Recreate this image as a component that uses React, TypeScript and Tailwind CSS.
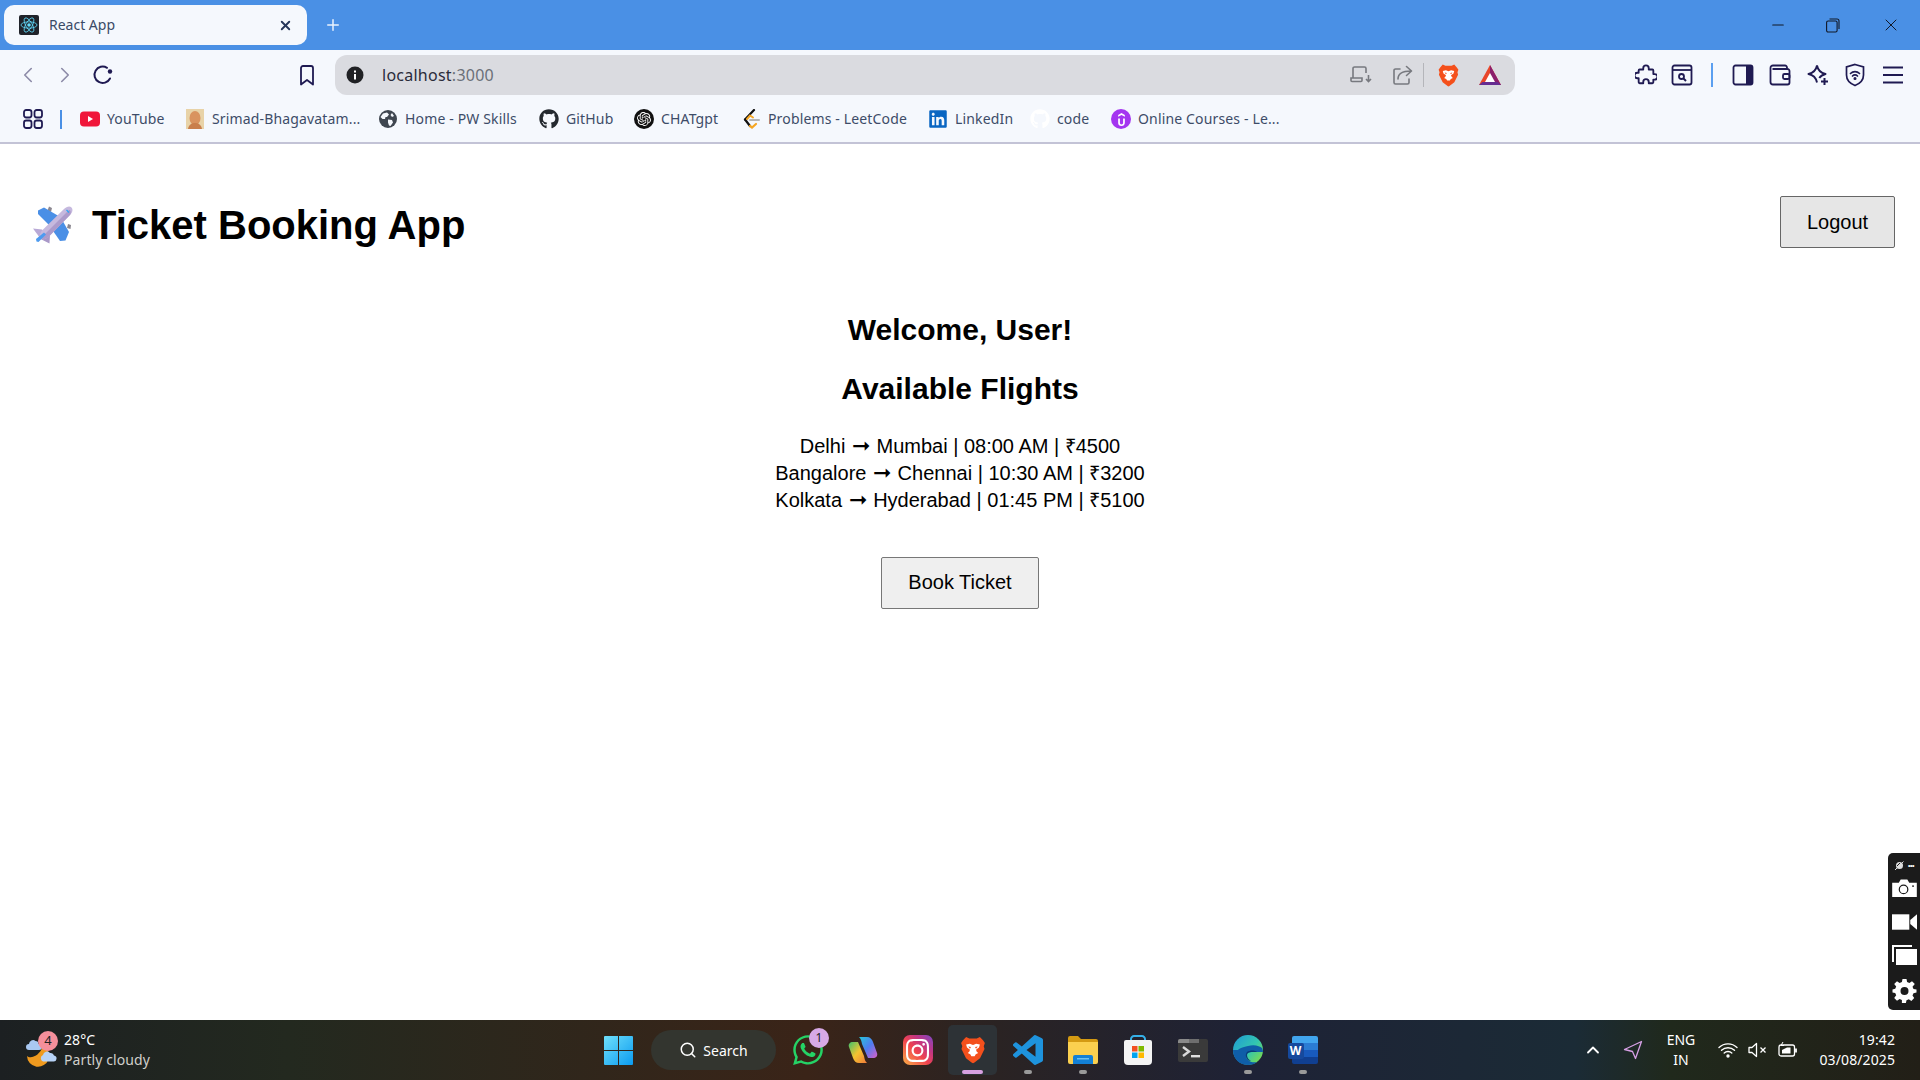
import { FaGithub, FaLinkedin, FaWhatsapp } from 'react-icons/fa'
import { SiOpenai, SiUdemy, SiInstagram } from 'react-icons/si'
import { X, Plus, ChevronLeft, ChevronRight, Search, ChevronUp, Minus } from 'lucide-react'

const ui = "font-['Noto_Sans',sans-serif]"
const navy = '#1f1a52'

function BraveIcon({ size = 24 }: { size?: number }) {
  return (
    <svg width={size} height={size} viewBox="0 0 24 24">
      <path d="M6.500 1.500 9 2.700h6l2.500-1.200L20 4.200l1.500 2.200-.9 2.500.6 2.300-3.600 7.300-4.700 3.600-.9.4-.9-.4-4.700-3.600-3.600-7.300.6-2.300-.9-2.500L4 4.200Z" fill="#f4501c" />
      <path d="M6.500 7.600 9.500 7l2.500.9 2.500-.9 3 .6-.7 2.400-2.400 1.700.6 1.600 1.200 1-2 1-.9 1.600H12h-1.300l-.9-1.600-2-1 1.200-1 .6-1.600-2.400-1.700Z" fill="#fff" />
      <path d="m8.200 9.200 2.200.4-.8 1.300Zm7.600 0-2.200.4.8 1.300ZM10.400 18h3.200L12 19.400Z" fill="#f4501c" />
    </svg>
  )
}

function PlaneEmoji() {
  return (
    <svg width="40" height="40" viewBox="0 0 40 40">
      <path d="M16 1.500 19 3l-1 4-3.500-1.500ZM35 19l3 1-.5 4-3.500-1Z" fill="#8b8790" />
      <path d="M5 5.500 11 2.500 29 13 19 23 5 9Z" fill="#4a8fe6" />
      <path d="M18 23 28 13 36 27 32.500 35.500 27 36Z" fill="#4a8fe6" />
      <path d="M0 23.500 9 24.500 13 29 7 33Z" fill="#b9a9d6" />
      <path d="M16.500 38.500 17 30 12.500 27 7.500 34Z" fill="#a998c8" />
      <path d="M38.500 2.500c1.800 1.800 1 5-1.500 7.500L15 32.500l-4.500 2-4-4 2-4.500L31 4c2.500-2.500 5.800-3.300 7.500-1.500Z" fill="#c6b9de" />
      <path d="M37 10 15 32.500l-4.500 2-2-2L36 5c1.500-.5 2.500 2.500 1 5Z" fill="#ac9bcb" />
      <path d="m3 34 8-6.500 2 2L5.500 37 3.500 36.500Z" fill="#4d9bf0" />
      <path d="m33.500 5 2.500 2.500" stroke="#2ea6f5" strokeWidth="1.200" fill="none" />
    </svg>
  )
}

const bookmarks = [
  { label: 'YouTube', width: 'w-[105px]', icon: <svg width="20" height="16" viewBox="0 0 20 16"><rect width="20" height="15" y="0.500" rx="4" fill="#f0163a" /><path d="m8 5 5 3-5 3Z" fill="#fff" /></svg> },
  { label: 'Srimad-Bhagavatam...', width: 'w-[193px]', icon: <svg width="20" height="20" viewBox="0 0 20 20"><rect x="1" width="18" height="20" fill="#e8d3a8" /><ellipse cx="10" cy="9" rx="5.500" ry="7" fill="#d9935f" /><path d="M3 20c1-5 4-6 7-6s6 1 7 6Z" fill="#c97f4c" /></svg> },
  { label: 'Home - PW Skills', width: 'w-[161px]', icon: <svg width="18" height="18" viewBox="0 0 18 18"><circle cx="9" cy="9" r="9" fill="#3f4650" /><path d="M4 3.500 8 2.500l2 2-2 2.500-1.500 0L6 9 3.500 9 1.500 7Zm5 6 4 .5 1 2.500-2.500 3.500-1.500-.5L9 12.500Zm4-6.500 2 3-2 1-1.500-2Z" fill="#f5f8fd" /></svg> },
  { label: 'GitHub', width: 'w-[95px]', icon: <FaGithub size={20} color="#24292f" /> },
  { label: 'CHATgpt', width: 'w-[107px]', icon: <span className="flex h-5 w-5 items-center justify-center rounded-full bg-[#111]"><SiOpenai size={14} color="#fff" /></span> },
  { label: 'Problems - LeetCode', width: 'w-[187px]', icon: <svg width="20" height="20" viewBox="0 0 20 20" fill="none"><path d="M13 1 4 10.500" stroke="#111" strokeWidth="2.200" strokeLinecap="round" /><path d="M4 10.500 9 17" stroke="#111" strokeWidth="2.200" strokeLinecap="round" /><path d="M9 17 11 18.500 15 15" stroke="#f5a623" strokeWidth="2.200" strokeLinecap="round" /><path d="M6 10 9 6.500 12 8.500" stroke="#f5a623" strokeWidth="2" strokeLinecap="round" /><path d="M9 11h9" stroke="#b5b5b5" strokeWidth="2" strokeLinecap="round" /></svg> },
  { label: 'LinkedIn', width: 'w-[102px]', icon: <FaLinkedin size={20} color="#0a66c2" /> },
  { label: 'code', width: 'w-[81px]', icon: <FaGithub size={20} color="#ffffff" /> },
  { label: 'Online Courses - Le...', width: 'w-auto', icon: <span className="flex h-5 w-5 items-center justify-center rounded-full bg-[#a435f0]"><SiUdemy size={13} color="#fff" /></span> },
]

const flights = [
  ['Delhi', 'Mumbai | 08:00 AM | ₹4500'],
  ['Bangalore', 'Chennai | 10:30 AM | ₹3200'],
  ['Kolkata', 'Hyderabad | 01:45 PM | ₹5100'],
]

function Slot({ className = 'w-[37.5px]', children }: { className?: string; children: React.ReactNode }) {
  return <div className={`flex shrink-0 items-center justify-center ${className}`}>{children}</div>
}

function BrowserChrome() {
  return (
    <header className={`shrink-0 ${ui}`}>
      {/* tab strip */}
      <div className="flex h-[50px] items-center bg-[#4a90e5] pl-1">
        <div className="flex h-[40px] w-[303px] items-center rounded-[10px] bg-[#f5f8fd] pl-[15px] pr-[14px]">
          <svg width="20" height="20" viewBox="0 0 20 20" fill="none" className="shrink-0">
            <rect width="20" height="20" rx="2" fill="#20232a" />
            <circle cx="10" cy="10" r="1.800" fill="#61dafb" />
            <g stroke="#61dafb" strokeWidth="0.800">
              <ellipse cx="10" cy="10" rx="8" ry="3.200" />
              <ellipse cx="10" cy="10" rx="8" ry="3.200" transform="rotate(60 10 10)" />
              <ellipse cx="10" cy="10" rx="8" ry="3.200" transform="rotate(120 10 10)" />
            </g>
          </svg>
          <span className="ml-[10px] pb-[2px] text-[14px] text-[#3a4a66]">React App</span>
          <X size={15} strokeWidth={3} color="#25365a" className="ml-auto" />
        </div>
        <Plus size={18} strokeWidth={2} color="#eaf2fd" className="ml-[17px]" />
        <div className="ml-auto flex items-center">
          <Minus size={18} strokeWidth={1.500} color="#111827" />
          <div className="ml-[39px] mr-[41px]">
            <svg width="14" height="15" viewBox="0 0 14 15" fill="none" stroke="#111827" strokeWidth="1.100"><rect x="0.600" y="3" width="10.500" height="11" rx="1.500" /><path d="M3.500 1h7.500a2 2 0 0 1 2 2v8" /></svg>
          </div>
          <X size={20} strokeWidth={1.200} color="#111827" />
          <div className="w-[19px]" />
        </div>
      </div>

      {/* toolbar */}
      <div className="flex h-[50px] items-center bg-[#f5f8fd] pl-[9px]">
        <Slot><ChevronLeft size={26} strokeWidth={1.500} color="#8d8ba8" /></Slot>
        <Slot><ChevronRight size={26} strokeWidth={1.500} color="#8d8ba8" /></Slot>
        <Slot>
          <svg width="22" height="22" viewBox="0 0 22 22" fill="none">
            <path d="M18 14.500A8.200 8.200 0 1 1 15 3.800" stroke={navy} strokeWidth="2" strokeLinecap="round" />
            <circle cx="18" cy="7.500" r="2.200" fill={navy} />
          </svg>
        </Slot>
        <Slot className="ml-[167px] w-[36px]">
          <svg width="16" height="21" viewBox="0 0 16 21" fill="none"><path d="M2 3a2 2 0 0 1 2-2h8a2 2 0 0 1 2 2v16.500l-6-4.500-6 4.500Z" stroke={navy} strokeWidth="1.800" strokeLinejoin="round" /></svg>
        </Slot>
        <div className="ml-[10.500px] flex h-[40px] w-[1180px] items-center rounded-[12px] bg-[#dadbe0] pl-[11px] pr-[5px]">
          <svg width="18" height="18" viewBox="0 0 18 18" className="shrink-0"><circle cx="9" cy="9" r="8.500" fill="#202124" /><rect x="8" y="8" width="2" height="5.500" fill="#fff" /><rect x="8" y="4.500" width="2" height="2" fill="#fff" /></svg>
          <span className="ml-[18px] text-[16px] tracking-[0.25px] text-[#2a2b3a]">localhost<span className="text-[#6b7078]">:3000</span></span>
          <div className="ml-auto flex items-center">
            <Slot className="w-[40px]">
              <svg width="22" height="20" viewBox="0 0 22 20" fill="none" stroke="#77797f" strokeWidth="1.600"><path d="M3 13V3.500A1.500 1.500 0 0 1 4.500 2h10A1.500 1.500 0 0 1 16 3.500V8" /><path d="M1 13h11v2.500a1 1 0 0 1-1 1H2a1 1 0 0 1-1-1Z" /><path d="M18.500 10v6.500m-2.500-2.500 2.500 2.500L21 14" /></svg>
            </Slot>
            <Slot className="w-[42px]">
              <svg width="21" height="21" viewBox="0 0 21 21" fill="none" stroke="#77797f" strokeWidth="1.600" strokeLinecap="round" strokeLinejoin="round"><path d="M8 4H3.500A1.500 1.500 0 0 0 2 5.500v12A1.500 1.500 0 0 0 3.500 19h12a1.500 1.500 0 0 0 1.500-1.500V14" /><path d="M6 14c0-5 4-8 13-8M14.500 1.500 19.500 6l-5 4.500" /></svg>
            </Slot>
            <div className="h-[24px] w-px bg-[#b4b5ba]" />
            <Slot className="ml-[2px] w-[44px]"><BraveIcon size={25} /></Slot>
            <Slot className="w-[40px]">
              <svg width="24" height="22" viewBox="0 0 24 22">
                <path d="M12 1 1 21h22Z" fill="#e8452a" />
                <path d="M12 1 23 21h-7L12 11Z" fill="#8a1f6e" />
                <path d="M1 21h22l-3.500-3h-15Z" fill="#662d91" />
                <path d="m12 9 5 9H7Z" fill="#fff" />
              </svg>
            </Slot>
          </div>
        </div>
        <div className="ml-[113px] flex items-center">
          <Slot className="w-[36px]">
            <svg width="22" height="22" viewBox="0 0 24 24" fill="none" stroke={navy} strokeWidth="2" strokeLinejoin="round"><path d="M9 5.500a3 3 0 0 1 6 0V7h4a1 1 0 0 1 1 1v4h1.500a3 3 0 0 1 0 6H20v3a1 1 0 0 1-1 1h-4v-1.500a3 3 0 0 0-6 0V22H5a1 1 0 0 1-1-1v-4.500H2.500a3 3 0 0 1 0-6H4V8a1 1 0 0 1 1-1h4Z" transform="translate(0 -1)" /></svg>
          </Slot>
          <Slot className="w-[36px]">
            <svg width="22" height="22" viewBox="0 0 22 22" fill="none" stroke={navy} strokeWidth="1.800"><rect x="1.500" y="1.500" width="19" height="19" rx="2" /><path d="M1.500 6h19" /><circle cx="10.500" cy="12.500" r="2.500" /><path d="m12.500 14.500 2.500 2.500" strokeWidth="2" /></svg>
          </Slot>
          <div className="mx-[11px] h-[24px] w-[2px] bg-[#5b9ff0]" />
          <Slot>
            <svg width="22" height="22" viewBox="0 0 22 22"><rect x="1.500" y="1.500" width="19" height="19" rx="2" fill="none" stroke={navy} strokeWidth="1.800" /><path d="M14 1.500h4.500a2 2 0 0 1 2 2v15a2 2 0 0 1-2 2H14Z" fill={navy} /></svg>
          </Slot>
          <Slot>
            <svg width="22" height="22" viewBox="0 0 22 22" fill="none" stroke={navy} strokeWidth="1.800"><path d="M18 5V3.500A2 2 0 0 0 16 1.500H4A2.500 2.500 0 0 0 1.500 4v14A2.500 2.500 0 0 0 4 20.500h14.500a2 2 0 0 0 2-2V7a2 2 0 0 0-2-2H3.500" /><rect x="14" y="10" width="6.500" height="5" rx="1.500" /></svg>
          </Slot>
          <Slot>
            <svg width="24" height="24" viewBox="0 0 24 24" fill="none" stroke={navy} strokeWidth="1.900" strokeLinejoin="round"><path d="M11 2.500c1 5 3.500 7.500 8.500 8.500-3 .8-5 2-6.200 4M11 2.500C10 7.500 7.500 10 2.500 11c5 1 7.500 3.500 8.500 8.500" /><path d="M18.500 15v7M15 18.500h7" strokeWidth="2" /></svg>
          </Slot>
          <Slot>
            <svg width="20" height="24" viewBox="0 0 20 24" fill="none" stroke={navy} strokeWidth="1.700" strokeLinecap="round"><path d="M10 1.500 18.500 4v8c0 5-3.500 8.500-8.500 10.500C5 20.500 1.500 17 1.500 12V4Z" /><path d="M5.500 10.500a6.500 6.500 0 0 1 9 0M7.500 13a3.500 3.500 0 0 1 5 0" /><circle cx="10" cy="15.500" r="0.700" fill={navy} /></svg>
          </Slot>
          <Slot>
            <svg width="22" height="18" viewBox="0 0 22 18" stroke={navy} strokeWidth="1.900"><path d="M1 1.500h20M1 9h20M1 16.500h20" /></svg>
          </Slot>
        </div>
      </div>

      {/* bookmarks bar */}
      <div className="flex h-[42px] items-start bg-[#f5f8fd] pl-[23px] pt-[9px]">
        <svg width="20" height="20" viewBox="0 0 20 20" fill="none" stroke={navy} strokeWidth="1.800" className="shrink-0">
          <rect x="1" y="1" width="7.500" height="7.500" rx="2.200" />
          <rect x="11.500" y="1" width="7.500" height="7.500" rx="2.200" />
          <rect x="1" y="11.500" width="7.500" height="7.500" rx="2.200" />
          <rect x="11.500" y="11.500" width="7.500" height="7.500" rx="2.200" />
        </svg>
        <div className="ml-[17px] mr-[18px] mt-px h-[19px] w-[2px] shrink-0 bg-[#4a90e5]" />
        {bookmarks.map(b => (
          <div key={b.label} className={`flex h-5 shrink-0 items-center gap-[7px] ${b.width}`}>
            <span className="flex w-[20px] shrink-0 justify-center">{b.icon}</span>
            <span className="whitespace-nowrap pb-[2px] text-[14px] tracking-[0.15px] text-[#3d4c68]">{b.label}</span>
          </div>
        ))}
      </div>
      <div className="h-[2px] bg-[#c3c3d6]" />
    </header>
  )
}

function CaptureWidget() {
  return (
    <div className="absolute bottom-[10px] right-0 flex h-[157px] w-[32px] flex-col items-center rounded-l-[5px] bg-[#1b1b1b] pt-[5px]">
      <div className="flex h-[14px] items-center gap-[3px]">
        <svg width="11" height="11" viewBox="0 0 11 11" fill="none" className="shrink-0"><circle cx="5.500" cy="5.500" r="3.500" fill="#ddd" /><path d="M1 10 9.500 1.500" stroke="#ddd" strokeWidth="1" /><path d="m3 6 3-3" stroke="#1b1b1b" strokeWidth="1" /></svg>
        <span className="whitespace-nowrap text-[7px] font-bold leading-none tracking-[-0.5px] text-white">•••</span>
      </div>
      <svg width="25" height="18" viewBox="0 0 26 19" className="mt-[7px] shrink-0"><path d="M0 4h7l2-3.500h7L18 4h8v15H0Z" fill="#fff" /><circle cx="12" cy="11" r="4.500" fill="none" stroke="#1b1b1b" strokeWidth="1.300" /><circle cx="22" cy="7.500" r="1" fill="#1b1b1b" /></svg>
      <svg width="25" height="16" viewBox="0 0 26 16" className="mt-[17px] shrink-0"><rect width="18" height="16" fill="#fff" /><path d="m19 6 7-6v16l-7-6Z" fill="#fff" /></svg>
      <svg width="25" height="20" viewBox="0 0 25 20" className="mt-[15px] shrink-0"><path d="M0 0h20v2H2v15H0Z" fill="#fff" /><rect x="4" y="4" width="21" height="16" fill="#fff" /></svg>
      <svg width="25" height="24" viewBox="0 0 24 24" className="mt-[14px] shrink-0"><path fillRule="evenodd" d="M10 0h4l.6 3 2.300 1 2.600-1.700 2.800 2.800L20 7.700l1 2.300 3 .6v3l-3 .6-1 2.300 1.700 2.600-2.800 2.800-2.600-1.700-2.300 1-.6 2.800h-4L9.400 21l-2.300-1-2.600 1.700-2.800-2.800 2-2.600-1-2.300L0 13.400v-3l2.700-.6 1-2.300-2-2.400 2.800-2.800L7.100 4l2.300-1Zm2 8a4 4 0 1 0 0 8 4 4 0 0 0 0-8Z" fill="#fff" /></svg>
    </div>
  )
}

function Page() {
  return (
    <main className="relative flex-1 bg-white font-['Liberation_Sans',Arial,sans-serif] text-black">
      <div className="flex items-start justify-between pl-[33px] pr-[25px] pt-[52px]">
        <div className="mt-[6px] flex items-center">
          <PlaneEmoji />
          <h1 className="ml-[19px] text-[40px] font-bold leading-[46px]">Ticket Booking App</h1>
        </div>
        <button className="h-[52px] w-[115px] rounded-[2px] border border-[#666] bg-[#e6e6e6] text-[20px]">Logout</button>
      </div>
      <div className="mt-[64px] flex flex-col items-center">
        <h2 className="text-[30px] font-bold leading-[36px]">Welcome, User!</h2>
        <h2 className="mt-[23px] text-[30px] font-bold leading-[36px]">Available Flights</h2>
        <ul className="mt-[26px] text-center text-[20px] leading-[27px]">
          {flights.map(([from, rest]) => (
            <li key={from}>{from} <span className="mx-[1px] text-[22px] leading-none">➞</span> {rest}</li>
          ))}
        </ul>
        <button className="mt-[43px] h-[52px] w-[158px] rounded-[2px] border border-[#777] bg-[#efefef] pb-[2px] text-[20px]">Book Ticket</button>
      </div>
      <CaptureWidget />
    </main>
  )
}

function WeatherIcon() {
  return (
    <div className="relative h-[36px] w-[36px] shrink-0">
      <svg width="36" height="36" viewBox="0 0 36 36">
        <path d="M20 14a11 11 0 1 1-16 10c3 3 12 1 16-10Z" fill="#ef9a1f" />
        <path d="M6 12a4 4 0 0 1 6.500-3 3 3 0 0 1 3 3H16a3 3 0 0 1 0 6H6a3 3 0 0 1 0-6Z" fill="#a9c8f2" />
        <path d="M20 23a4 4 0 0 1 7-2 3.500 3.500 0 0 1 4 2.500 3 3 0 0 1-1 6H20a3.500 3.500 0 0 1 0-6.500Z" fill="#b7d3f7" />
      </svg>
      <span className="absolute left-[15px] top-[-1px] flex h-[20px] w-[20px] items-center justify-center rounded-full bg-[#f58f9b] text-[13px] text-[#222]">4</span>
    </div>
  )
}

function Taskbar() {
  const slot = 'relative flex h-[50px] w-[55px] shrink-0 items-center justify-center'
  return (
    <footer className={`flex h-[60px] shrink-0 items-center bg-[linear-gradient(90deg,#1c2022_0%,#23291f_15%,#3a2418_42%,#2a2323_52%,#1e2236_65%,#1b2b36_82%,#20291c_87%,#221f17_100%)] text-white ${ui}`}>
      <div className="flex w-[591px] shrink-0 items-center pl-[23px]">
        <WeatherIcon />
        <div className="ml-[5px] flex flex-col text-[14px] leading-[20px] tracking-[0.1px]">
          <span>28°C</span>
          <span className="text-[#d0cfcb]">Partly cloudy</span>
        </div>
      </div>
      <div className={slot}>
        <svg width="29" height="29" viewBox="0 0 29 29">
          <defs><linearGradient id="win" x1="0" y1="0" x2="1" y2="1"><stop offset="0" stopColor="#6fe0fb" /><stop offset="1" stopColor="#0b9bf0" /></linearGradient></defs>
          <path d="M1 0h13v14H0V1a1 1 0 0 1 1-1Zm14 0h13a1 1 0 0 1 1 1v13H15ZM0 15h14v14H1a1 1 0 0 1-1-1Zm15 0h14v13a1 1 0 0 1-1 1H15Z" fill="url(#win)" />
        </svg>
      </div>
      <div className="ml-[5px] flex h-[40px] w-[125px] shrink-0 items-center justify-center gap-[6px] rounded-full bg-[#33352f]">
        <Search size={18} strokeWidth={2} />
        <span className="text-[14px]">Search</span>
      </div>
      <div className="ml-[4px] flex items-center">
        <div className={slot}>
          <FaWhatsapp size={34} color="#25d366" />
          <span className="absolute left-[29px] top-[3px] flex h-[20px] w-[20px] items-center justify-center rounded-full bg-[#d7a9e6] text-[12px] text-[#222]">1</span>
        </div>
        <div className={slot}>
          <svg width="30" height="28" viewBox="0 0 30 28">
            <defs>
              <linearGradient id="cop1" x1="0" y1="0" x2="1" y2="1"><stop offset="0" stopColor="#26c6da" /><stop offset="0.500" stopColor="#4f7cf0" /><stop offset="1" stopColor="#d85fc8" /></linearGradient>
              <linearGradient id="cop2" x1="0" y1="0" x2="1" y2="1"><stop offset="0" stopColor="#3fbf6a" /><stop offset="0.500" stopColor="#f4c430" /><stop offset="1" stopColor="#f07a3a" /></linearGradient>
            </defs>
            <path d="M11 1h8c3 0 5 2 6 5l4 11c1 3-1 5-4 5h-5L14 8c-.5-3-1-5-3-7Z" fill="url(#cop1)" />
            <path d="M19 27h-8c-3 0-5-2-6-5L1 11c-1-3 1-5 4-5h5l6 14c.5 3 1 5 3 7Z" fill="url(#cop2)" />
          </svg>
        </div>
        <div className={slot}>
          <div className="flex h-[30px] w-[30px] items-center justify-center rounded-[7px] bg-[linear-gradient(45deg,#fcb045_0%,#f0434f_45%,#c13584_70%,#7a49c8_100%)]">
            <SiInstagram size={23} color="#fff" />
          </div>
        </div>
        <div className={slot}>
          <div className="flex h-[50px] w-[49px] items-center justify-center rounded-[5px] bg-[#2d3236]"><BraveIcon size={30} /></div>
          <span className="absolute bottom-[1px] left-[17px] h-[4px] w-[21px] rounded-full bg-[#d7a0e0]" />
        </div>
        <div className={slot}>
          <svg width="30" height="30" viewBox="0 0 24 24"><path d="M23.150 2.587 18.210.21a1.494 1.494 0 0 0-1.705.29l-9.460 8.630-4.120-3.128a.999.999 0 0 0-1.276.057L.327 7.261A1 1 0 0 0 .326 8.740L3.899 12 .326 15.260a1 1 0 0 0 .001 1.479L1.650 17.940a.999.999 0 0 0 1.276.057l4.120-3.128 9.460 8.630a1.492 1.492 0 0 0 1.704.29l4.942-2.377A1.500 1.500 0 0 0 24 20.060V3.939a1.500 1.500 0 0 0-.85-1.352zm-5.146 14.861L10.826 12l7.178-5.448v10.896z" fill="#1e93dd" /></svg>
          <span className="absolute bottom-[1px] left-[24px] h-[4px] w-[8px] rounded-full bg-[#9a9a9a]" />
        </div>
        <div className={slot}>
          <svg width="30" height="28" viewBox="0 0 30 28">
            <path d="M0 2a2 2 0 0 1 2-2h8l3 3h15a2 2 0 0 1 2 2v4H0Z" fill="#d49a12" />
            <path d="M0 6h30v20a2 2 0 0 1-2 2H2a2 2 0 0 1-2-2Z" fill="#fbd04f" />
            <path d="M5 28v-7a2 2 0 0 1 2-2h16a2 2 0 0 1 2 2v7Z" fill="#1380d6" />
            <rect x="9" y="22" width="12" height="1.500" fill="#6cc0f2" />
          </svg>
          <span className="absolute bottom-[1px] left-[24px] h-[4px] w-[8px] rounded-full bg-[#9a9a9a]" />
        </div>
        <div className={slot}>
          <svg width="30" height="30" viewBox="0 0 30 30">
            <path d="M7 4c0-2 2-4 4-4h8c2 0 4 2 4 4v2h-2V4c0-1-1-2-2-2h-8C10 2 9 3 9 4v2H7Z" fill="#35b0e8" />
            <path d="M1 7a2 2 0 0 1 2-2h24a2 2 0 0 1 2 2v19a4 4 0 0 1-4 4H5a4 4 0 0 1-4-4Z" fill="#f4f4f4" />
            <rect x="9" y="11" width="5.500" height="5.500" fill="#f25022" /><rect x="15.500" y="11" width="5.500" height="5.500" fill="#7fba00" />
            <rect x="9" y="17.500" width="5.500" height="5.500" fill="#00a4ef" /><rect x="15.500" y="17.500" width="5.500" height="5.500" fill="#ffb900" />
          </svg>
        </div>
        <div className={slot}>
          <svg width="30" height="23" viewBox="0 0 30 23">
            <rect width="30" height="23" rx="2" fill="#3a3a3a" />
            <path d="M0 2a2 2 0 0 1 2-2h9v4H0Z" fill="#8a8a8a" /><rect x="11" width="10" height="4" fill="#6e6e6e" />
            <path d="m5 8 6 4.500L5 17" fill="none" stroke="#d8d8d8" strokeWidth="2.400" />
            <rect x="13" y="16" width="9" height="2.400" fill="#e0e0e0" />
          </svg>
        </div>
        <div className={slot}>
          <svg width="30" height="30" viewBox="0 0 30 30">
            <defs><linearGradient id="edge" x1="0" y1="0" x2="1" y2="0.800"><stop offset="0" stopColor="#1e9ad6" /><stop offset="0.600" stopColor="#33c6b0" /><stop offset="1" stopColor="#7ddc4a" /></linearGradient></defs>
            <circle cx="15" cy="15" r="15" fill="url(#edge)" />
            <path d="M0 15c0 9 7 15 15 15 4 0 7-1 9-3-5 1-10-1-11-5-.5-3 2-5 6-5h11c0-2-.5-3-1-4-2-2-8-4-14-2-6 1-9 3-10 4Z" fill="#0f5ea8" />
            <path d="M14 17c3-2 8-2 10 0h-5c-3 0-5 1-5 3 0 3 2 5 4 6-4 0-7-5-4-9Z" fill="#0a3d78" />
          </svg>
          <span className="absolute bottom-[1px] left-[24px] h-[4px] w-[8px] rounded-full bg-[#9a9a9a]" />
        </div>
        <div className={slot}>
          <div className="relative h-[28px] w-[30px]">
            <svg width="26" height="28" viewBox="0 0 26 28" className="absolute right-0 top-0">
              <path d="M2 0h22a2 2 0 0 1 2 2v5H0V2a2 2 0 0 1 2-2Z" fill="#41a5ee" /><rect y="7" width="26" height="7" fill="#2b7cd3" /><rect y="14" width="26" height="7" fill="#185abd" /><path d="M0 21h26v5a2 2 0 0 1-2 2H2a2 2 0 0 1-2-2Z" fill="#103f91" />
            </svg>
            <span className="absolute left-0 top-[7px] flex h-[16px] w-[16px] items-center justify-center rounded-[2px] bg-[#15499d] text-[12px] font-bold leading-none text-white">W</span>
          </div>
          <span className="absolute bottom-[1px] left-[24px] h-[4px] w-[8px] rounded-full bg-[#9a9a9a]" />
        </div>
      </div>
      <div className="ml-auto flex items-center pr-[25px]">
        <Slot className="w-[40px]"><ChevronUp size={20} strokeWidth={2.200} /></Slot>
        <Slot className="w-[40px]">
          <svg width="20" height="20" viewBox="0 0 20 20" fill="none" stroke="#d7a0e6" strokeWidth="1.300" strokeLinejoin="round"><path d="M18.500 1.500 1.500 9.500l8 2 3 7Z" /></svg>
        </Slot>
        <div className="ml-[4px] mr-[8px] flex w-[48px] flex-col items-center text-[14px] leading-[20px]">
          <span>ENG</span>
          <span>IN</span>
        </div>
        <Slot className="w-[30px]">
          <svg width="20" height="16" viewBox="0 0 20 16" fill="none" stroke="#fff" strokeWidth="1.400" strokeLinecap="round"><path d="M1 5.500a13 13 0 0 1 18 0M3.500 8.300a9.500 9.500 0 0 1 13 0M6.200 11a5.500 5.500 0 0 1 7.600 0" /><circle cx="10" cy="14" r="1" fill="#fff" /></svg>
        </Slot>
        <Slot className="w-[30px]">
          <svg width="20" height="16" viewBox="0 0 20 16" fill="none" stroke="#fff" strokeWidth="1.300"><path d="M1 5.500h3L8.500 1.500v13L4 10.500H1Z" strokeLinejoin="round" /><path d="m12.500 5.500 5 5m0-5-5 5" /></svg>
        </Slot>
        <Slot className="w-[30px]">
          <svg width="20" height="16" viewBox="0 0 20 16" fill="none" stroke="#fff" strokeWidth="1.300"><rect x="1" y="3" width="15.500" height="11" rx="2" /><path d="M18 6.500v4" strokeWidth="1.800" /><path d="M4 11.500V8l5-2.500h3.500v6Z" fill="#fff" stroke="none" /><path d="m5 0-2 3.500h3" strokeWidth="1" /></svg>
        </Slot>
        <div className="ml-[2px] flex w-[90px] flex-col items-end text-[14px] leading-[20px] tracking-[0.1px]">
          <span>19:42</span>
          <span>03/08/2025</span>
        </div>
      </div>
    </footer>
  )
}

export default function App() {
  return (
    <div className="flex h-[1080px] w-[1920px] flex-col overflow-hidden">
      <BrowserChrome />
      <Page />
      <Taskbar />
    </div>
  )
}
